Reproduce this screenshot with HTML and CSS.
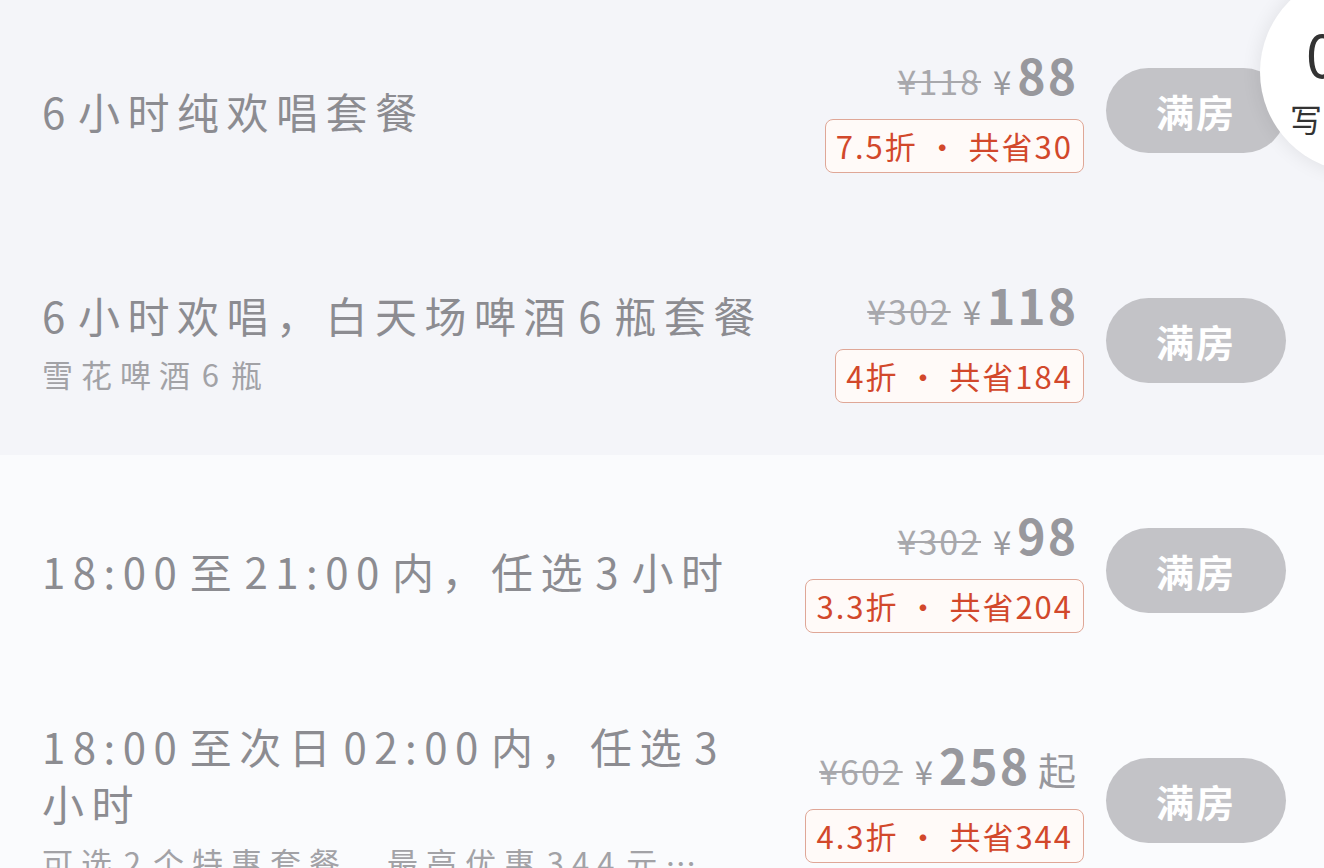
FILE: index.html
```html
<!DOCTYPE html>
<html lang="zh-CN">
<head>
    <meta charset="UTF-8">
    <meta name="viewport" content="width=device-width, initial-scale=1.0">
    <title>欢唱套餐</title>
    <link rel="stylesheet" href="styles.css">
</head>
<body>

    <div class="list">
        <!-- Daytime packages -->
        <section class="group group-day">
            <div class="item">
                <div class="info">
                    <div class="title">6小时纯欢唱套餐</div>
                </div>
                <div class="price">
                    <div class="price-line">
                        <span class="old">¥118</span>
                        <span class="now"><span class="yen">¥</span>88</span>
                    </div>
                    <span class="tag">7.5折 · 共省30</span>
                </div>
                <button class="btn">满房</button>
            </div>

            <div class="item">
                <div class="info">
                    <div class="title">6小时欢唱，白天场啤酒6瓶套餐</div>
                    <div class="desc">雪花啤酒6瓶</div>
                </div>
                <div class="price">
                    <div class="price-line">
                        <span class="old">¥302</span>
                        <span class="now"><span class="yen">¥</span>118</span>
                    </div>
                    <span class="tag">4折 · 共省184</span>
                </div>
                <button class="btn">满房</button>
            </div>
        </section>

        <!-- Evening packages -->
        <section class="group group-night">
            <div class="item">
                <div class="info">
                    <div class="title">18:00至21:00内，任选3小时</div>
                </div>
                <div class="price">
                    <div class="price-line">
                        <span class="old">¥302</span>
                        <span class="now"><span class="yen">¥</span>98</span>
                    </div>
                    <span class="tag">3.3折 · 共省204</span>
                </div>
                <button class="btn">满房</button>
            </div>

            <div class="item">
                <div class="info">
                    <div class="title">18:00至次日02:00内，任选3小时</div>
                    <div class="desc">可选2个特惠套餐，最高优惠344元…</div>
                </div>
                <div class="price">
                    <div class="price-line">
                        <span class="old">¥602</span>
                        <span class="now"><span class="yen">¥</span>258<span class="from">起</span></span>
                    </div>
                    <span class="tag">4.3折 · 共省344</span>
                </div>
                <button class="btn">满房</button>
            </div>
        </section>
    </div>

    <!-- Floating review button, partly off the right edge -->
    <div class="float-btn">
        <span class="float-num">0</span>
        <span class="float-text">写</span>
    </div>

</body>
</html>
```

FILE: styles.css
```css
* {
    margin: 0;
    padding: 0;
    box-sizing: border-box;
}

body {
    font-family: "Noto Sans CJK SC", "Noto Sans", sans-serif;
    background: #fafbfd;
    color: #8e8e93;
    width: 1324px;
    height: 868px;
    overflow: hidden;
    position: relative;
}

.list {
    margin-top: -5px;
}

.group-day {
    background: #f4f5f9;
}

.group-night {
    background: #fafbfd;
}

.item {
    display: flex;
    align-items: center;
    height: 230px;
    padding: 0 38px 0 42px;
}

.info {
    flex: 1;
    min-width: 0;
    margin-right: 40px;
}

.title {
    font-size: 42px;
    line-height: 57px;
    letter-spacing: 7.5px;
    color: #8c8c91;
    text-autospace: normal;
}

.desc {
    font-size: 31px;
    line-height: 42px;
    letter-spacing: 8px;
    color: #a2a2a6;
    margin-top: 10px;
    white-space: nowrap;
    text-autospace: normal;
}

/* Price block */
.price {
    display: flex;
    flex-direction: column;
    align-items: flex-end;
    margin-right: 22px;
}

.price-line {
    display: flex;
    align-items: baseline;
    gap: 12px;
    line-height: 52px;
    padding-right: 6px;
}

.old {
    font-size: 34px;
    letter-spacing: 2px;
    color: #a8a8ac;
    text-decoration: line-through;
    text-decoration-thickness: 2px;
}

.now {
    font-size: 48px;
    font-weight: bold;
    letter-spacing: 2px;
    color: #98989d;
}

.yen {
    font-size: 33px;
    font-weight: normal;
    margin-right: 4px;
}

.from {
    font-size: 38px;
    font-weight: normal;
    margin-left: 8px;
}

.tag {
    margin-top: 12px;
    padding: 5px 10px;
    font-size: 31px;
    line-height: 42px;
    letter-spacing: 2px;
    color: #d2482b;
    border: 1.5px solid #dfa797;
    border-radius: 8px;
    background: #fffaf8;
    white-space: nowrap;
}

/* Sold out button */
.btn {
    width: 180px;
    height: 85px;
    border: none;
    border-radius: 43px;
    background: #c3c3c7;
    color: #fff;
    font-family: inherit;
    font-size: 38px;
    font-weight: bold;
    letter-spacing: 2px;
    flex-shrink: 0;
}

/* Floating button on the right edge */
.float-btn {
    position: absolute;
    left: 1260px;
    top: -28px;
    width: 200px;
    height: 200px;
    border-radius: 50%;
    background: #fff;
    box-shadow: 0 0 20px rgba(0, 0, 0, 0.09);
    display: flex;
    flex-direction: column;
    align-items: flex-start;
    padding: 50px 0 0 30px;
}

.float-num {
    font-size: 58px;
    line-height: 62px;
    color: #333;
    margin-left: 16px;
}

.float-text {
    font-size: 32px;
    line-height: 40px;
    color: #333;
    margin-top: 14px;
}
```
